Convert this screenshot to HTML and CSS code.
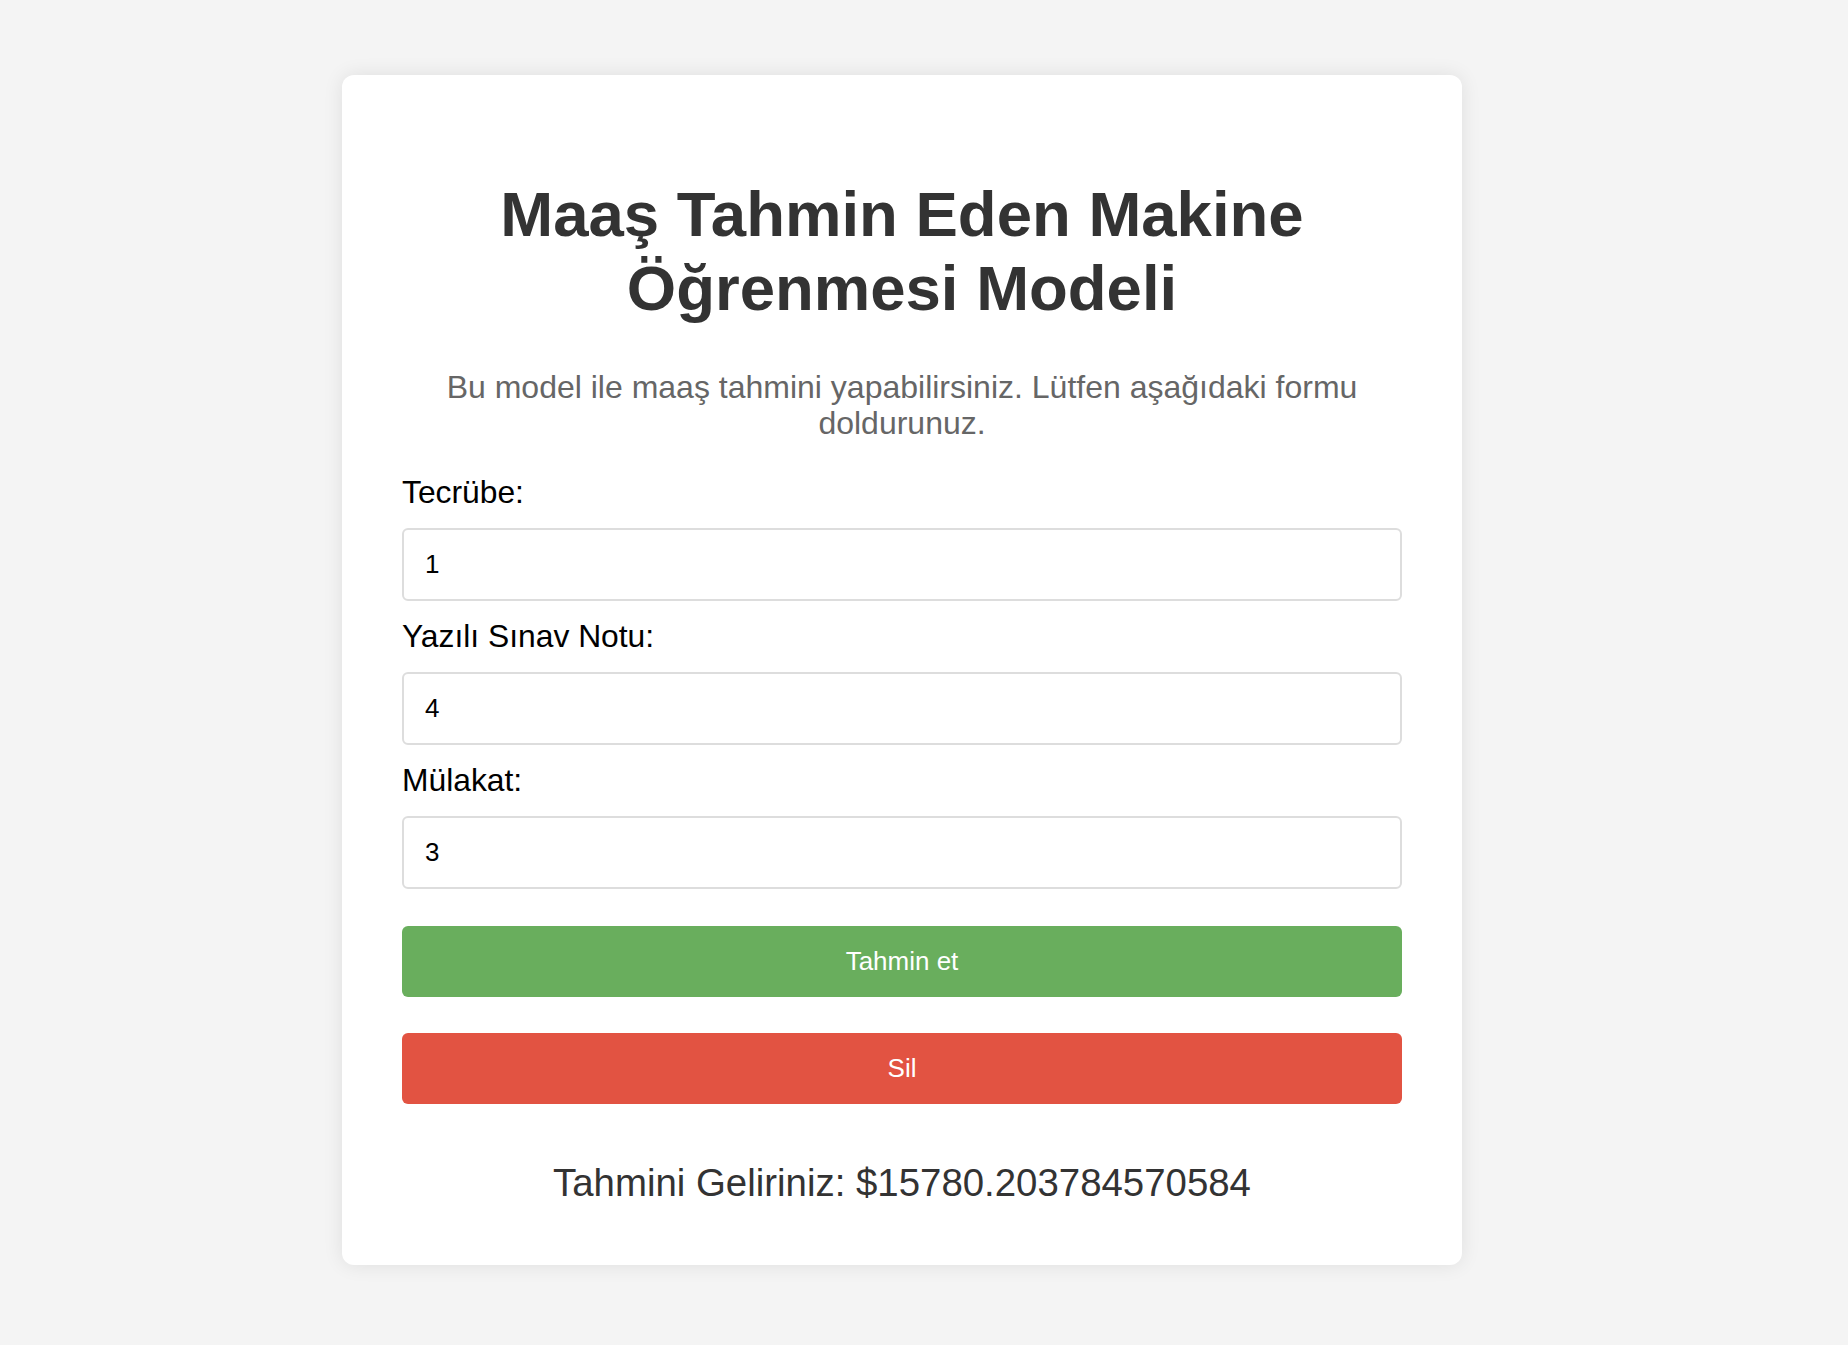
FILE: index.html
```html
<!DOCTYPE html>
<html lang="tr">
<head>
<meta charset="utf-8">
<title>Maaş Tahmin Eden Makine Öğrenmesi Modeli</title>
<link rel="stylesheet" href="styles.css">
</head>
<body>
<main class="card">
  <h1 class="title">Maaş Tahmin Eden Makine Öğrenmesi Modeli</h1>
  <p class="subtitle">Bu model ile maaş tahmini yapabilirsiniz. Lütfen aşağıdaki formu doldurunuz.</p>
  <form class="form">
    <label class="label" for="tecrube">Tecrübe:</label>
    <input class="field" id="tecrube" type="text" value="1">
    <label class="label" for="yazili">Yazılı Sınav Notu:</label>
    <input class="field" id="yazili" type="text" value="4">
    <label class="label" for="mulakat">Mülakat:</label>
    <input class="field" id="mulakat" type="text" value="3">
    <button class="btn btn-predict" type="button">Tahmin et</button>
    <button class="btn btn-clear" type="button">Sil</button>
  </form>
  <p class="result">Tahmini Geliriniz: $15780.203784570584</p>
</main>
</body>
</html>
```

FILE: styles.css
```css
html, body {
  margin: 0;
  padding: 0;
  background: #f4f4f4;
  font-family: "Liberation Sans", Arial, sans-serif;
}

body {
  padding-top: 75px;
  padding-bottom: 80px;
}

.card {
  box-sizing: border-box;
  width: 1120px;
  margin-left: 342px;
  padding: 60px 60px 60px;
  background: #ffffff;
  border-radius: 12px;
  box-shadow: 0 0 20px rgba(0, 0, 0, 0.09);
}

.title {
  margin: 42px 0 0;
  font-size: 63.5px;
  line-height: 74px;
  font-weight: bold;
  text-align: center;
  color: #333333;
}

.subtitle {
  margin: 44px 0 0;
  font-size: 32px;
  line-height: 36px;
  text-align: center;
  color: #666666;
}

.form {
  display: flex;
  flex-direction: column;
  margin-top: 34px;
}

.label {
  display: block;
  font-size: 31.8px;
  line-height: 35px;
  color: #000000;
  margin-bottom: 18px;
}

.field {
  box-sizing: border-box;
  width: 100%;
  height: 73px;
  margin: 0 0 18px;
  padding: 0 21px;
  border: 2px solid #dddddd;
  border-radius: 6px;
  font-family: "Liberation Sans", Arial, sans-serif;
  font-size: 26px;
  color: #000000;
  background: #ffffff;
  outline: none;
}

.btn {
  box-sizing: border-box;
  width: 100%;
  height: 71px;
  border: none;
  border-radius: 6px;
  font-family: "Liberation Sans", Arial, sans-serif;
  font-size: 26px;
  color: #ffffff;
  cursor: pointer;
}

.btn-predict {
  margin-top: 19px;
  background: #69ae5d;
}

.btn-clear {
  margin-top: 36px;
  background: #e25342;
}

.result {
  margin: 57px 0 0;
  font-size: 38.4px;
  line-height: 44px;
  text-align: center;
  color: #333333;
}
```
